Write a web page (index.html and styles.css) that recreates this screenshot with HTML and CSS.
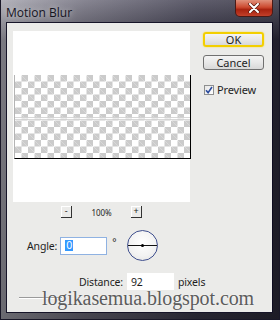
FILE: index.html
```html
<!DOCTYPE html>
<html lang="en">
<head>
  <meta charset="UTF-8" />
  <title>Motion Blur</title>
  <link rel="stylesheet" href="styles.css">
</head>
<body>

  <div class="window">
    <div class="titlebar">
      <span class="title">Motion Blur</span>
      <span class="close">
        <svg width="14" height="10" viewBox="0 0 14 10">
          <path d="M3 1 L11 9 M11 1 L3 9" stroke="#5a1a12" stroke-width="3.4" stroke-linecap="round"/>
          <path d="M3 1 L11 9 M11 1 L3 9" stroke="#fff" stroke-width="2" stroke-linecap="round"/>
        </svg>
      </span>
    </div>

    <div class="client">
      <div class="top">
        <div class="preview">
          <div class="checker"><div class="streak"></div></div>
        </div>
        <div class="actions">
          <button class="btn ok">OK</button>
          <button class="btn">Cancel</button>
          <label class="check">
            <span class="box">
              <svg width="8" height="8" viewBox="0 0 8 8"><path d="M1 4.2 L3.1 6.6 L7 1" fill="none" stroke="#2c4c9e" stroke-width="1.6"/></svg>
            </span>
            Preview
          </label>
        </div>
      </div>

      <div class="zoom-row">
        <span class="mini">-</span>
        <span class="pct">100%</span>
        <span class="mini">+</span>
      </div>

      <div class="angle-row">
        <span class="label">Angle:</span>
        <span class="field angle"><span class="sel">0</span></span>
        <span class="deg">°</span>
        <span class="dial"><span class="axis"></span><span class="pin"></span></span>
      </div>

      <div class="distance-row">
        <span class="label">Distance:</span>
        <span class="field distance">92</span>
        <span class="label">pixels</span>
      </div>

      <div class="rule"></div>
    </div>

    <div class="watermark">logikasemua.blogspot.com</div>
  </div>

</body>
</html>
```

FILE: styles.css
```css
* {
  margin: 0;
  padding: 0;
  box-sizing: border-box;
}

body {
  width: 280px;
  height: 320px;
  overflow: hidden;
  font-family: 'Noto Sans', 'Open Sans', sans-serif;
  font-size: 10.5px;
  letter-spacing: -0.15px;
  color: #1e1e1e;
}

.window {
  position: relative;
  width: 280px;
  height: 320px;
  background:
    linear-gradient(180deg, rgba(255, 255, 255, 0.18), rgba(0, 0, 0, 0.25) 40px, rgba(0, 0, 0, 0.35)),
    linear-gradient(90deg, #a4a3ad, #6d6b7a 30%, #3c3a4c 70%, #2c2a3a);
  border: 1px solid #1a1828;
  border-top: none;
}

.titlebar {
  height: 22px;
  display: flex;
  align-items: flex-start;
  justify-content: space-between;
}

.title {
  font-family: 'Open Sans', 'Noto Sans', sans-serif;
  font-size: 12px;
  letter-spacing: 0;
  color: #15141f;
  padding: 4px 0 0 5px;
  text-shadow: 0 0 6px rgba(255, 255, 255, 0.7);
}

.close {
  width: 38px;
  height: 17px;
  margin-right: 6px;
  display: flex;
  align-items: center;
  justify-content: center;
  border: 1px solid #4a1a16;
  border-top: none;
  border-radius: 0 0 5px 5px;
  background: linear-gradient(180deg, #e0917c, #cc4a30 45%, #a8220f 60%, #c2402a);
}

.client {
  width: 267px;
  height: 291px;
  margin-left: 5px;
  background: #ebebe9;
  border: 1px solid #161428;
  border-right-color: #0e0c20;
}

.top {
  display: flex;
  padding: 8px 0 0 6px;
}

.preview {
  width: 177px;
  height: 171px;
  background: #fff;
  padding-top: 44px;
}

.checker {
  position: relative;
  width: 177px;
  height: 84px;
  margin-left: 1px;
  background-color: #fff;
  background-image:
    linear-gradient(45deg, #cbcbcb 25%, transparent 25%, transparent 75%, #cbcbcb 75%),
    linear-gradient(45deg, #cbcbcb 25%, transparent 25%, transparent 75%, #cbcbcb 75%);
  background-size: 13px 13px;
  background-position: 0 0, 6.5px 6.5px;
  border-left: 1px solid #b4b4b4;
  border-right: 1px solid #000;
  border-bottom: 1.5px solid #000;
  margin-right: -2px;
}

.streak {
  position: absolute;
  left: 0;
  right: 0;
  top: 42px;
  height: 3px;
  background: rgba(255, 255, 255, 0.6);
  border-top: 1px solid rgba(200, 200, 200, 0.7);
  border-bottom: 1px solid rgba(200, 200, 200, 0.7);
}

.actions {
  margin: 1px 0 0 13px;
  display: flex;
  flex-direction: column;
}

.btn {
  width: 61px;
  height: 15px;
  font-family: inherit;
  font-size: 11px;
  line-height: 13px;
  color: #1e1e1e;
  border: 1px solid #707070;
  border-radius: 3px;
  background: linear-gradient(180deg, #f4f4f4, #e8e8e8 50%, #d8d8d8);
  margin-bottom: 8px;
}

.ok {
  border: 2px solid #f3cf00;
  box-shadow: 0 0 2px #f7dc4a;
  line-height: 11px;
}

.check {
  display: flex;
  align-items: center;
  gap: 3px;
  font-size: 11px;
  margin: 4px 0 0 1px;
}

.box {
  width: 10px;
  height: 10px;
  border: 1px solid #8e8f8f;
  background: linear-gradient(135deg, #e6e6e6, #fff);
  display: flex;
  align-items: center;
  justify-content: center;
}

.zoom-row {
  width: 183px;
  padding-left: 6px;
  margin-top: 4px;
  display: flex;
  justify-content: center;
  align-items: center;
  gap: 19px;
}

.mini {
  width: 11px;
  height: 12px;
  font-size: 9px;
  line-height: 10px;
  text-align: center;
  border-right: 1px solid #333;
  border-bottom: 1px solid #333;
  box-shadow: inset 1px 1px 0 #fff;
}

.pct {
  font-size: 8px;
  width: 21px;
  text-align: center;
}

.angle-row {
  display: flex;
  align-items: center;
  padding-left: 20px;
  margin-top: 12px;
  height: 31px;
}

.field {
  height: 18px;
  width: 47px;
  background: #fff;
  display: flex;
  align-items: center;
}

.angle {
  margin-left: 3px;
  border: 1px solid #8fb2e2;
  padding-left: 4px;
}

.sel {
  background: #3399ff;
  color: #fff;
  line-height: 11px;
  padding: 0 1px;
}

.deg {
  margin: -8px 0 0 5px;
  font-size: 10px;
}

.dial {
  position: relative;
  width: 31px;
  height: 31px;
  margin-left: 11px;
  border: 1.5px solid #3f4f8e;
  border-radius: 50%;
  background: radial-gradient(circle at 50% 40%, #fff, #f2f2f2 60%, #dcdcdc);
}

.axis {
  position: absolute;
  left: 0;
  right: 0;
  top: 14px;
  height: 1px;
  background: #111;
}

.pin {
  position: absolute;
  left: 12.5px;
  top: 12.5px;
  width: 3px;
  height: 3px;
  background: #000;
  border-radius: 50%;
}

.distance-row {
  display: flex;
  align-items: center;
  padding-left: 72px;
  margin-top: 12px;
  gap: 4px;
}

.distance {
  height: 17px;
  padding-left: 4px;
}

.rule {
  width: 43px;
  height: 2px;
  margin: 7px 0 0 12px;
  border-top: 1px solid #9a9a9a;
  border-bottom: 1px solid #fff;
}

.watermark {
  position: absolute;
  left: 41px;
  top: 288px;
  font-family: 'Liberation Serif', serif;
  font-size: 20px;
  line-height: 20px;
  letter-spacing: -0.1px;
  color: #5c5c5c;
  text-shadow: 0 0 2px rgba(255, 255, 255, 0.8);
}
```
